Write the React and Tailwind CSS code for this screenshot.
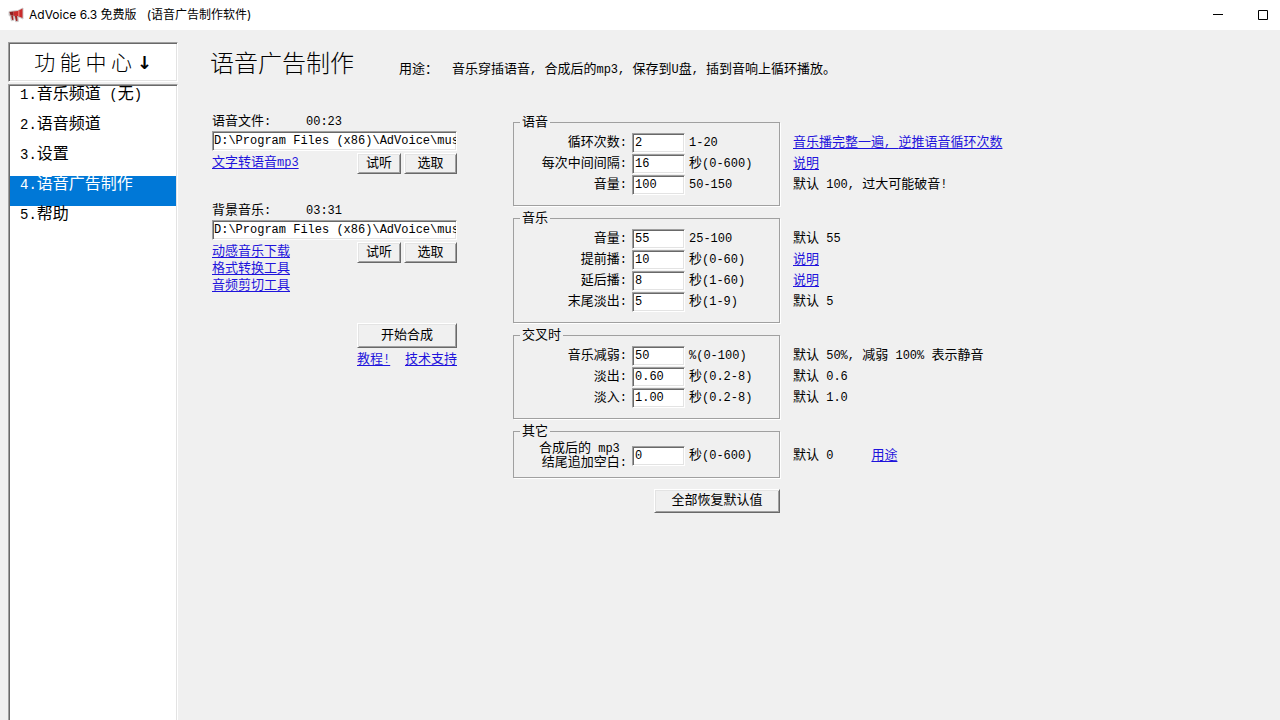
const MENU = ['1.音乐频道 (无)', '2.语音频道', '3.设置', '4.语音广告制作', '5.帮助']
const PATH = 'D:\\Program Files (x86)\\AdVoice\\mus'

const GROUPS = [
  {
    title: '语音',
    rows: [
      { id: 'loop', label: '循环次数:', value: '2', range: '1-20', link: '音乐播完整一遍, 逆推语音循环次数' },
      { id: 'gap', label: '每次中间间隔:', value: '16', range: '秒(0-600)', link: '说明' },
      { id: 'voice-volume', label: '音量:', value: '100', range: '50-150', note: '默认 100, 过大可能破音!' },
    ],
  },
  {
    title: '音乐',
    rows: [
      { id: 'music-volume', label: '音量:', value: '55', range: '25-100', note: '默认 55' },
      { id: 'before', label: '提前播:', value: '10', range: '秒(0-60)', link: '说明' },
      { id: 'after', label: '延后播:', value: '8', range: '秒(1-60)', link: '说明' },
      { id: 'tail', label: '末尾淡出:', value: '5', range: '秒(1-9)', note: '默认 5' },
    ],
  },
  {
    title: '交叉时',
    rows: [
      { id: 'duck', label: '音乐减弱:', value: '50', range: '%(0-100)', note: '默认 50%, 减弱 100% 表示静音' },
      { id: 'fade-out', label: '淡出:', value: '0.60', range: '秒(0.2-8)', note: '默认 0.6' },
      { id: 'fade-in', label: '淡入:', value: '1.00', range: '秒(0.2-8)', note: '默认 1.0' },
    ],
  },
]

const SUNKEN =
  'bg-white border border-t-[#a0a0a0] border-l-[#a0a0a0] border-r-white border-b-white shadow-[inset_1px_1px_0_#696969,inset_-1px_-1px_0_#e3e3e3]'
const RAISED =
  'bg-[#f0f0f0] border border-t-white border-l-white border-r-[#696969] border-b-[#696969] shadow-[inset_1px_1px_0_#e3e3e3,inset_-1px_-1px_0_#a0a0a0]'

// Latin runs are set one step smaller so they take about half a CJK cell
function Mixed({ children, latin = 'text-[12px]' }) {
  return children.split(/([\x20-\x7e]+)/).map((part, i) =>
    i % 2 ? (
      <span key={i} className={`${latin} whitespace-pre`}>{part}</span>
    ) : (
      part
    )
  )
}

function Link({ children }) {
  return (
    <a href="#" className="text-[#1f14dc] underline underline-offset-2 whitespace-nowrap">
      <Mixed>{children}</Mixed>
    </a>
  )
}

function Button({ className, children }) {
  return (
    <button type="button" className={`${RAISED} flex items-center justify-center ${className}`}>
      {children}
    </button>
  )
}

function FilePicker({ id, label, time, links }) {
  return (
    <div>
      <div className="flex h-4 leading-4">
        <label htmlFor={id} className="w-[94px]"><Mixed>{label}</Mixed></label>
        <span className="text-[12px]">{time}</span>
      </div>
      <input id={id} defaultValue={PATH} className={`${SUNKEN} mt-px block h-5 w-full pl-px text-[12px]`} />
      <div className="mt-[2px] flex items-start justify-between">
        <div className="flex flex-col leading-[17px] pt-px">
          {links.map((text) => (
            <Link key={text}>{text}</Link>
          ))}
        </div>
        <div className="flex gap-[3px]">
          <Button className="h-[21px] w-11">试听</Button>
          <Button className="h-[21px] w-[53px]">选取</Button>
        </div>
      </div>
    </div>
  )
}

function Field({ id, value, range, label, className = 'h-[21px]' }) {
  return (
    <div className={`flex items-center ${className}`}>
      <label htmlFor={id} className="w-[113px] text-right leading-[13px] whitespace-pre-line">
        <Mixed>{label}</Mixed>
      </label>
      <input id={id} defaultValue={value} className={`${SUNKEN} ml-[5px] h-5 w-[53px] px-[2px] text-[12px]`} />
      <span className="ml-1"><Mixed>{range}</Mixed></span>
    </div>
  )
}

function Group({ title, className = 'pt-[3px] pb-[10px]', children }) {
  return (
    <fieldset className="w-[267px] shrink-0 border border-[#a0a0a0] shadow-[1px_1px_0_#fff]">
      <legend className="ml-[6px] px-[2px] leading-[13px]">{title}</legend>
      <div className={className}>{children}</div>
    </fieldset>
  )
}

function TitleBar() {
  return (
    <header className="flex h-[30px] items-center bg-white pl-2">
      <svg className="h-4 w-4" viewBox="0 0 16 16">
        <path d="M1 4.5 5 4l5-.5L15 1v11l-4-2-1 .2.3 4.3-2.6.2L6.300 10H5l.5 3.500-2.200.2L2.300 9 1 8.500z" fill="#b9b3b3" stroke="#cfcaca" />
        <path d="M1.500 5 5.500 4.500V8.500l-3-.2z" fill="#8f2020" />
        <path d="M5.500 4.500 10 4l4.500-2.500v9.500L10 9 5.500 8.700z" fill="#c92b2b" />
        <path d="M3.200 8.500 5 8.600l.5 4.200-1.400.2zM6.800 8.800l2.200.2.500 4.800-1.500.2z" fill="#a32424" />
        <path d="M10 4l1.500-.8v6.300L10 9z" fill="#e66a62" />
      </svg>
      <h1 className="ml-[5px] flex-1 whitespace-pre font-['Inter','Noto_Sans_CJK_SC',sans-serif] text-[12px]">
        AdVoice 6.3 免费版   (语音广告制作软件)
      </h1>
      <button type="button" aria-label="最小化" className="flex h-full w-[45px] items-center justify-center">
        <svg className="h-[11px] w-[11px]" viewBox="0 0 11 11" stroke="#000">
          <path d="M1 4.500h10" />
        </svg>
      </button>
      <button type="button" aria-label="最大化" className="flex h-full w-10 items-center justify-end pr-3">
        <svg className="h-[11px] w-[11px]" viewBox="0 0 11 11" fill="none" stroke="#000">
          <path d="M1.500.5h9v9h-9z" />
        </svg>
      </button>
    </header>
  )
}

function Sidebar() {
  return (
    <aside className="flex w-[170px] shrink-0 flex-col gap-[2px] pt-3">
      <h2 className={`${SUNKEN} flex h-10 items-center justify-center whitespace-pre font-['Noto_Sans_CJK_SC',sans-serif] text-[21px] font-light`}>
        功 能 中 心 <span className="font-['DejaVu_Sans',sans-serif] text-[18px] font-bold">↓</span>
      </h2>
      <nav className="flex-1 border-t border-r border-l border-t-[#a0a0a0] border-r-white border-l-[#a0a0a0] bg-white p-px text-[16px] shadow-[inset_1px_1px_0_#696969,inset_-1px_0_0_#e3e3e3]">
        {MENU.map((item) => (
          <a
            key={item}
            href="#"
            className={`block h-[30px] pl-[10px] leading-[19px] ${item.startsWith('4') ? 'bg-[#0078d7] text-white' : ''}`}
          >
            <Mixed latin="text-[14px]">{item}</Mixed>
          </a>
        ))}
      </nav>
    </aside>
  )
}

export default function App() {
  return (
    <div className="flex min-h-screen flex-col bg-[#f0f0f0] font-['Liberation_Mono','Noto_Sans_CJK_SC',monospace] text-[13px] text-black">
      <TitleBar />
      <div className="flex flex-1 pl-2">
        <Sidebar />
        <main className="flex-1 pt-6 pl-8">
          <div className="flex items-end leading-4">
            <h2 className="text-[24px] leading-6 font-light">语音广告制作</h2>
            <span className="ml-[45px]">用途：</span>
            <p className="ml-[14px]"><Mixed>音乐穿插语音, 合成后的mp3, 保存到U盘, 插到音响上循环播放。</Mixed></p>
          </div>

          <div className="mt-9 flex items-start gap-14 pl-[2px]">
            <form className="flex w-[245px] shrink-0 flex-col gap-[29px]">
              <FilePicker id="voice-file" label="语音文件:" time="00:23" links={['文字转语音mp3']} />
              <FilePicker id="music-file" label="背景音乐:" time="03:31" links={['动感音乐下载', '格式转换工具', '音频剪切工具']} />
              <div className="w-[100px] self-end">
                <Button className="h-[25px] w-full">开始合成</Button>
                <div className="mt-1 flex justify-between leading-4">
                  <Link>教程!</Link>
                  <Link>技术支持</Link>
                </div>
              </div>
            </form>

            <div className="flex flex-col gap-[6px] pt-[2px]">
              {GROUPS.map(({ title, rows }) => (
                <section key={title} className="flex gap-[13px]">
                  <Group title={title}>
                    {rows.map((row) => (
                      <Field key={row.id} {...row} />
                    ))}
                  </Group>
                  <div className="pt-4 leading-[21px] whitespace-nowrap">
                    {rows.map(({ id, link, note }) => (
                      <p key={id} className="h-[21px]">{link ? <Link>{link}</Link> : <Mixed>{note}</Mixed>}</p>
                    ))}
                  </div>
                </section>
              ))}
              <section className="flex gap-[13px]">
                <Group title="其它" className="pt-[5px] pb-2">
                  <Field id="blank" label={'合成后的 mp3 \n结尾追加空白:'} value="0" range="秒(0-600)" className="h-[26px]" />
                </Group>
                <div className="flex items-start gap-[38px] pt-[18px] leading-[26px]">
                  <p><Mixed>默认 0</Mixed></p>
                  <Link>用途</Link>
                </div>
              </section>
              <div className="mt-[5px] flex w-[267px] justify-end">
                <Button className="h-6 w-[126px]">全部恢复默认值</Button>
              </div>
            </div>
          </div>
        </main>
      </div>
    </div>
  )
}
